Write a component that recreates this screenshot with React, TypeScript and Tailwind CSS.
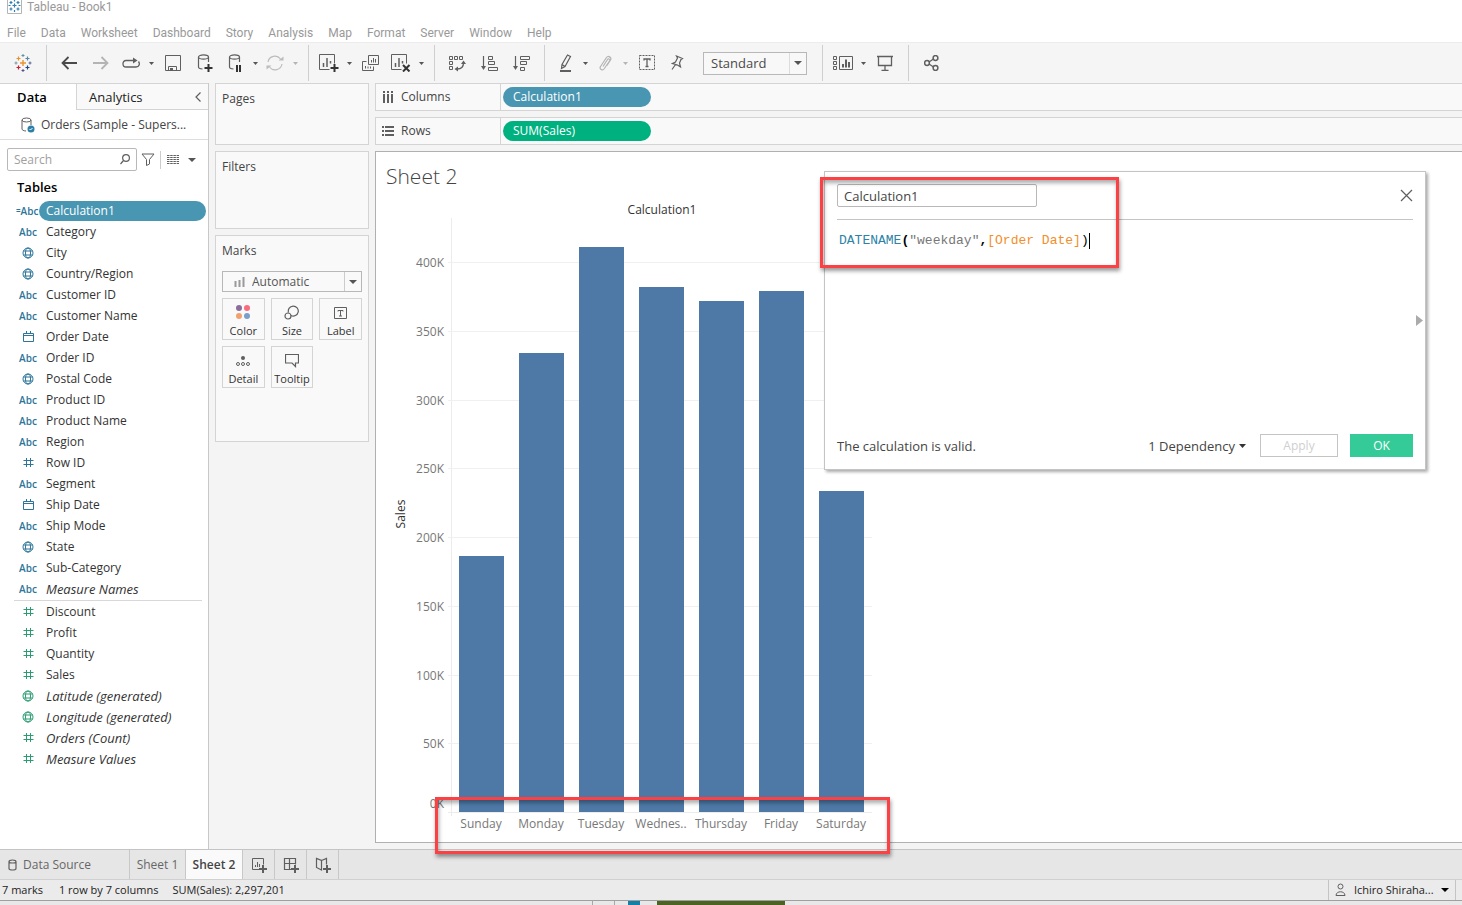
import { ReactNode } from "react";

interface IconProps {
  w?: number;
  h?: number;
  color?: string;
  children: ReactNode;
}

const Icon = ({ w = 20, h = 20, color = "#5f5f5f", children }: IconProps) => (
  <svg width={w} height={h} viewBox={`0 0 ${w} ${h}`} fill="none" stroke={color} className="shrink-0" aria-hidden="true">
    {children}
  </svg>
);

const Arrow = ({ color = "#555555" }: { color?: string }) => (
  <Icon w={8} h={4} color="none">
    <path d="M0 0h8L4 4z" fill={color} />
  </Icon>
);

const SmallCaret = ({ label, color = "#555555" }: { label: string; color?: string }) => (
  <button type="button" aria-label={label} className="flex h-8 w-3 items-center justify-center">
    <Icon w={5} h={3} color="none">
      <path d="M0 0h5L2.5 3z" fill={color} />
    </Icon>
  </button>
);

const ToolButton = ({ label, narrow, children }: { label: string; narrow?: boolean; children: ReactNode }) => (
  <button
    type="button"
    aria-label={label}
    className={`flex h-8 shrink-0 items-center justify-center ${narrow ? "w-7" : "w-8"}`}
  >
    {children}
  </button>
);

const ToolDivider = () => <div className="mr-1.5 ml-[7px] h-9 w-px shrink-0 bg-[#cfcfcf]" />;

const TableauLogo = () => (
  <Icon w={18} h={18} color="none">
    <path d="M9 6v6M6 9h6" stroke="#eb912c" strokeWidth="1.4" />
    <path d="M4.5 2.5v4M2.5 4.5h4" stroke="#eb912c" strokeWidth="1.2" />
    <path d="M13.5 2.5v4M11.5 4.5h4" stroke="#59879b" strokeWidth="1.2" />
    <path d="M4.5 11.5v4M2.5 13.5h4" stroke="#c72035" strokeWidth="1.2" />
    <path d="M13.5 11.5v4M11.5 13.5h4" stroke="#1f447e" strokeWidth="1.2" />
    <path d="M9 0v3M7.5 1.5h3" stroke="#5c8fa8" />
    <path d="M9 15v3M7.5 16.5h3" stroke="#59508a" />
    <path d="M2 7.5v3M.5 9h3" stroke="#7199a6" />
    <path d="M16 7.5v3M14.5 9h3" stroke="#5b6591" />
  </Icon>
);

const WindowLogo = () => (
  <Icon w={15} h={15} color="#2f7fb5">
    <path d="M.5 0v13.5h14V0" stroke="#b5b5b5" />
    <path d="M7.5 3.5v4M5.5 5.5h4M4 1v3M2.5 2.5h3M11 1v3M9.5 2.5h3M4 7.5v3M2.5 9h3M11 7.5v3M9.5 9h3M7.5 0v1.5M7.5 10v2M1.5 5.5h2M11.5 5.5h2" strokeWidth="1.2" />
  </Icon>
);

const DatabaseShape = () => (
  <>
    <ellipse cx="6.5" cy="4" rx="5" ry="2.2" strokeWidth="1.2" />
    <path d="M1.5 4v10c0 1 1.5 1.8 4 2M11.5 4v5" strokeWidth="1.2" />
  </>
);

const Toolbar = () => (
  <div role="toolbar" className="flex h-[41px] shrink-0 items-center border-t border-[#ececec] bg-[#f5f5f5] pl-[7px]">
    <ToolButton label="Start page"><TableauLogo /></ToolButton>
    <ToolDivider />
    <ToolButton label="Undo">
      <Icon w={16} h={14} color="#4a4a4a"><path d="M16 7H1.5M7.5 1l-6 6 6 6" strokeWidth="1.8" /></Icon>
    </ToolButton>
    <ToolButton label="Redo">
      <Icon w={16} h={14} color="#b4b4b4"><path d="M0 7h14.5M8.5 1l6 6-6 6" strokeWidth="1.8" /></Icon>
    </ToolButton>
    <ToolButton label="Replay" narrow>
      <Icon w={18} h={12}>
        <path d="M12 3.5H4C0 3.5 0 10 4 10h10c3.5 0 4-3.5 2.5-5.5" strokeWidth="1.3" />
        <path d="M11 .5l4.5 3-4.5 3z" fill="#5f5f5f" stroke="none" />
      </Icon>
    </ToolButton>
    <SmallCaret label="Replay options" />
    <ToolButton label="Save">
      <Icon w={17} h={17}>
        <path d="M.5 .5h15v15H.5zM3.5 15.5v-4h8v4" />
        <path d="M5 13h3v2.5H5z" fill="#5f5f5f" stroke="none" />
      </Icon>
    </ToolButton>
    <ToolButton label="New data source">
      <Icon w={17} h={20}>
        <DatabaseShape />
        <path d="M11.5 11v8M7.5 15h8" stroke="#333333" strokeWidth="2" />
      </Icon>
    </ToolButton>
    <ToolButton label="Pause auto updates" narrow>
      <Icon w={14} h={20}>
        <DatabaseShape />
        <path d="M9 12v7M12 12v7" stroke="#333333" strokeWidth="2" />
      </Icon>
    </ToolButton>
    <SmallCaret label="Pause options" />
    <ToolButton label="Run update" narrow>
      <Icon w={18} h={16} color="#bcbcbc">
        <path d="M2 7a7 7 0 0 1 12.5-3M16 9a7 7 0 0 1-12.5 3" strokeWidth="1.2" />
        <path d="M12.5 5.5h5v-4zM5.5 10.5h-5v4z" fill="#bcbcbc" stroke="none" />
      </Icon>
    </ToolButton>
    <SmallCaret label="Update options" color="#b5b5b5" />
    <ToolDivider />
    <ToolButton label="New worksheet" narrow>
      <Icon w={20} h={18}>
        <path d="M10.5 15.5H.5V.5h15v9" />
        <path d="M4.5 13V9M8 13V4M11.5 9.5V7" strokeWidth="1.5" />
        <path d="M15.5 10v8M11.5 14h8" stroke="#333333" strokeWidth="2" />
      </Icon>
    </ToolButton>
    <SmallCaret label="New sheet options" />
    <ToolButton label="Duplicate">
      <Icon w={18} h={17}>
        <path d="M6.5 .5h10v9h-10zM4.5 6.5h-4v9h11v-4" />
        <path d="M9.5 7.5V5M11.5 7.5V3M13.5 7.5V4M3.5 13.5V11M6 13.5v-2M8.5 13.5v-2" />
      </Icon>
    </ToolButton>
    <ToolButton label="Clear sheet" narrow>
      <Icon w={20} h={18}>
        <path d="M10.5 15.5H.5V.5h15v9" />
        <path d="M4.5 13V9M8 13V4M11.5 9.5V7" strokeWidth="1.5" />
        <path d="M12 11l6.5 6.5M18.5 11L12 17.5" stroke="#333333" strokeWidth="2" />
      </Icon>
    </ToolButton>
    <SmallCaret label="Clear options" />
    <ToolDivider />
    <ToolButton label="Swap rows and columns">
      <Icon w={17} h={17}>
        <path d="M.5 1.5h3v3h-3zM5.5 1.5h3v3h-3zM10.5 1.5h3v3h-3zM.5 6.5h3v3h-3zM.5 11.5h3v3h-3z" />
        <path d="M8 14c5 0 6.5-2 6.5-6" strokeWidth="1.3" />
        <path d="M9 11.5v5L5.5 14zM12 9h5l-2.5-3.5z" fill="#5f5f5f" stroke="none" />
      </Icon>
    </ToolButton>
    <ToolButton label="Sort ascending">
      <Icon w={17} h={15}>
        <path d="M2.5 0v12" strokeWidth="1.2" />
        <path d="M0 10h5L2.5 14z" fill="#5f5f5f" stroke="none" />
        <path d="M7.5 .5h4v3h-4zM7.5 5.5h6v3h-6zM7.5 11.5h9v3h-9z" />
      </Icon>
    </ToolButton>
    <ToolButton label="Sort descending">
      <Icon w={17} h={15}>
        <path d="M2.5 0v12" strokeWidth="1.2" />
        <path d="M0 10h5L2.5 14z" fill="#5f5f5f" stroke="none" />
        <path d="M7.5 .5h9v3h-9zM7.5 5.5h6v3h-6zM7.5 11.5h4v3h-4z" />
      </Icon>
    </ToolButton>
    <ToolDivider />
    <ToolButton label="Highlight" narrow>
      <Icon w={13} h={18}>
        <path d="M8.5 1l3 1.5-5.5 10-3.5 2 .5-4zM3 10.5l3 2" strokeWidth="1.2" />
        <path d="M1 17h11" strokeWidth="2" />
      </Icon>
    </ToolButton>
    <SmallCaret label="Highlight options" />
    <ToolButton label="Group members" narrow>
      <Icon w={13} h={17} color="#b4b4b4">
        <path d="M4 11.5l4.5-7c1-1.5 3 0 2 1.5L5 14c-1.5 2-5 0-3.5-2.5l6-9C9 0 13 2.500 11.500 5L8 10.500" strokeWidth="1.2" />
      </Icon>
    </ToolButton>
    <SmallCaret label="Group options" color="#b5b5b5" />
    <ToolButton label="Show mark labels">
      <Icon w={17} h={16}>
        <path d="M.5 .5h15v14H.5z" strokeDasharray="2 1" />
        <path d="M5 5.5V4h6v1.5M8 4v7.5M6.5 11.5h3" strokeWidth="1.3" />
      </Icon>
    </ToolButton>
    <ToolButton label="Fix axes" narrow>
      <Icon w={13} h={16}>
        <path d="M5.5 1l6 2.5-1.5 1L8.500 8l1 4L6.500 10 1.500 8.500l3-1.500L6.500 3zM4.500 9.500L1 14.500" strokeWidth="1.2" />
      </Icon>
    </ToolButton>
    <div className="relative ml-3 h-[23px] w-[104px] shrink-0">
      <select aria-label="Fit" className="h-full w-full appearance-none border border-[#b8b8b8] bg-[#f8f8f8] pl-[7px] text-[13px] leading-5 text-[#4a4a4a]">
        <option>Standard</option>
      </select>
      <span className="pointer-events-none absolute inset-y-px right-px flex w-[17px] items-center justify-center border-l border-[#dcdcdc]">
        <Arrow />
      </span>
    </div>
    <div className="w-2 shrink-0" />
    <ToolDivider />
    <ToolButton label="Show cards" narrow>
      <Icon w={20} h={15}>
        <path d="M.5 .5h3v3h-3zM.5 5.5h3v3h-3zM.5 10.5h3v3h-3zM6.5 .5h13v13h-13z" />
        <path d="M10 11.5V8M13 11.5V3.5M16 11.5V6" strokeWidth="2" />
      </Icon>
    </ToolButton>
    <SmallCaret label="Card options" />
    <ToolButton label="Presentation mode">
      <Icon w={16} h={16}>
        <path d="M0 1.5h16M1.5 1.5v9h13v-9M8 10.5v5M4.5 15.5h7" strokeWidth="1.3" />
      </Icon>
    </ToolButton>
    <ToolDivider />
    <ToolButton label="Share">
      <Icon w={15} h={16}>
        <circle cx="3" cy="8" r="2.4" strokeWidth="1.5" />
        <circle cx="11.5" cy="3" r="2.4" strokeWidth="1.5" />
        <circle cx="11.5" cy="13" r="2.4" strokeWidth="1.5" />
        <path d="M5 7l4.5-3M5 9l4.5 3" strokeWidth="1.3" />
      </Icon>
    </ToolButton>
  </div>
);

type FieldKind = "calc" | "abc" | "geo" | "date" | "num";

const dimensions: [FieldKind, string][] = [
  ["calc", "Calculation1"],
  ["abc", "Category"],
  ["geo", "City"],
  ["geo", "Country/Region"],
  ["abc", "Customer ID"],
  ["abc", "Customer Name"],
  ["date", "Order Date"],
  ["abc", "Order ID"],
  ["geo", "Postal Code"],
  ["abc", "Product ID"],
  ["abc", "Product Name"],
  ["abc", "Region"],
  ["num", "Row ID"],
  ["abc", "Segment"],
  ["date", "Ship Date"],
  ["abc", "Ship Mode"],
  ["geo", "State"],
  ["abc", "Sub-Category"],
  ["abc", "Measure Names"],
];

const measures: [FieldKind, string][] = [
  ["num", "Discount"],
  ["num", "Profit"],
  ["num", "Quantity"],
  ["num", "Sales"],
  ["geo", "Latitude (generated)"],
  ["geo", "Longitude (generated)"],
  ["num", "Orders (Count)"],
  ["num", "Measure Values"],
];

const generated = ["Measure Names", "Latitude (generated)", "Longitude (generated)", "Orders (Count)", "Measure Values"];

const FieldIcon = ({ kind, color }: { kind: FieldKind; color: string }) => {
  switch (kind) {
    case "geo":
      return (
        <Icon w={12} h={12} color={color}>
          <circle cx="6" cy="6" r="5" />
          <ellipse cx="6" cy="6" rx="2.5" ry="5" />
          <path d="M1.5 4h9M1.5 8h9" />
        </Icon>
      );
    case "date":
      return (
        <Icon w={11} h={11} color={color}>
          <path d="M.5 2.5h10v8H.5zM.5 4.5h10M3.5 0v2.5M7.5 0v2.5" />
        </Icon>
      );
    case "num":
      return (
        <Icon w={11} h={11} color={color}>
          <path d="M3.5 1v9M7.5 1v9M.5 3.5h10M.5 7.5h10" />
        </Icon>
      );
    case "calc":
      return (
        <span className="flex items-center text-[10px] font-semibold text-[#2d7599]">
          <span className="text-[8px]">=</span>Abc
        </span>
      );
    default:
      return <span className="text-[10px] font-semibold text-[#2d7599]">Abc</span>;
  }
};

const FieldRow = ({ kind, name, color }: { kind: FieldKind; name: string; color: string }) => (
  <li className="flex h-[21px] items-center pl-4">
    <span className={`flex w-6 shrink-0 items-center ${kind === "calc" ? "justify-start" : "justify-center"}`}>
      <FieldIcon kind={kind} color={color} />
    </span>
    <button
      type="button"
      className={`mr-0.5 ml-[-1px] h-5 grow rounded-full pl-[7px] text-left leading-5 ${
        kind === "calc" ? "bg-[#4996b2] text-white" : "text-[#333333]"
      } ${generated.includes(name) ? "text-[13px] italic" : ""}`}
    >
      {name}
    </button>
  </li>
);

const DataPane = () => (
  <aside className="flex w-[209px] shrink-0 flex-col border-r border-[#c8c8c8] bg-white">
    <div className="flex h-[27px] shrink-0 border-t border-[#d4d4d4] text-[13px]">
      <button type="button" className="w-[76px] pr-3 font-semibold text-black">Data</button>
      <button type="button" className="flex grow items-center justify-between border-b border-l border-[#d4d4d4] bg-[#f9f9f9] pr-[7px] pl-3 text-[#222222]">
        Analytics
        <Icon w={6} h={10}><path d="M5.5 .5L1 5l4.5 4.5" strokeWidth="1.2" /></Icon>
      </button>
    </div>
    <div className="flex h-[30px] shrink-0 items-center gap-1.5 border-b border-[#dedede] pl-[21px] text-[#444444]">
      <Icon w={14} h={16}>
        <ellipse cx="5.5" cy="3" rx="4.5" ry="2" />
        <path d="M1 3v9c0 1 1.5 1.8 4 2M10 3v5" />
        <circle cx="10" cy="12" r="3.5" fill="#2d7fa5" stroke="none" />
        <path d="M8.5 12l1 1 2-2" stroke="#ffffff" />
      </Icon>
      Orders (Sample - Supers...
    </div>
    <div className="mt-2 flex h-[23px] shrink-0 items-center pl-[7px]">
      <div className="relative h-full w-[130px]">
        <input aria-label="Search" placeholder="Search" className="h-full w-full rounded-xs border border-[#b8b8b8] pl-1.5 placeholder:text-[#a0a0a0]" />
        <span className="absolute inset-y-0 right-[7px] flex items-center">
          <Icon w={10} h={11}><circle cx="6" cy="4" r="3.4" strokeWidth="1.2" /><path d="M3.5 6.5L.5 10" strokeWidth="1.2" /></Icon>
        </span>
      </div>
      <button type="button" aria-label="Filter fields" className="ml-1">
        <Icon w={14} h={13}><path d="M1 1h12L8.5 6.5V11l-3 1.5v-6z" /></Icon>
      </button>
      <div className="mr-1.5 ml-[5px] h-[18px] w-px bg-[#cccccc]" />
      <button type="button" aria-label="View options" className="flex items-center gap-2">
        <Icon w={13} h={9}><path d="M0 .5h12M0 2.5h12M0 4.5h12M0 6.5h12M0 8.5h12" strokeDasharray="2.5 .7" /></Icon>
        <Arrow />
      </button>
    </div>
    <h2 className="mt-[5px] mb-0.5 pl-[17px] text-[13px] leading-[22px] font-semibold text-black">Tables</h2>
    <ul>
      {dimensions.map(([kind, name]) => (
        <FieldRow key={name} kind={kind} name={name} color="#2d7599" />
      ))}
    </ul>
    <div className="mt-px mr-1.5 ml-3.5 h-px shrink-0 bg-[#d8d8d8]" />
    <ul>
      {measures.map(([kind, name]) => (
        <FieldRow key={name} kind={kind} name={name} color="#2a9d72" />
      ))}
    </ul>
  </aside>
);

const MarkButton = ({ label, children }: { label: string; children: ReactNode }) => (
  <button type="button" className="flex h-[42px] flex-col items-center justify-between border border-[#d4d4d4] pt-1.5 text-[11px] leading-4 text-[#333333]">
    {children}
    {label}
  </button>
);

const Cards = () => (
  <div className="mx-1.5 flex w-[154px] shrink-0 flex-col gap-1.5 text-[#444444]">
    <section className="h-[62px] border border-[#d4d4d4] bg-[#f9f9f9] px-1.5 pt-[7px]">Pages</section>
    <section className="h-[78px] border border-[#d4d4d4] bg-[#f9f9f9] px-1.5 pt-[7px]">Filters</section>
    <section className="h-[207px] border border-[#d4d4d4] bg-[#f9f9f9] px-1.5 pt-[7px]">
      Marks
      <div className="relative mt-3 mb-1.5 h-[21px]">
        <select aria-label="Mark type" className="h-full w-full appearance-none border border-[#b8b8b8] pl-[29px] text-[#555555]">
          <option>Automatic</option>
        </select>
        <span className="pointer-events-none absolute inset-y-0 left-3 flex items-center">
          <Icon w={11} h={10} color="#9a9a9a"><path d="M1.5 10V4M5.5 10V3M9.5 10V0" strokeWidth="2" /></Icon>
        </span>
        <span className="pointer-events-none absolute inset-y-px right-px flex w-[17px] items-center justify-center border-l border-[#cccccc]">
          <Arrow />
        </span>
      </div>
      <div className="grid grid-cols-3 gap-1.5">
        <MarkButton label="Color">
          <Icon w={15} h={15} color="none">
            <circle cx="3" cy="3" r="3" fill="#8a6d9b" />
            <circle cx="11" cy="3" r="3" fill="#fb6a7e" />
            <circle cx="3" cy="11" r="3" fill="#f2a072" />
            <circle cx="11" cy="11" r="3" fill="#7b9fc9" />
          </Icon>
        </MarkButton>
        <MarkButton label="Size">
          <Icon w={15} h={15}>
            <path d="M4.5 7.5a5 5 0 1 1 2.5 3" strokeWidth="1.2" />
            <circle cx="4" cy="11" r="3" strokeWidth="1.2" />
          </Icon>
        </MarkButton>
        <MarkButton label="Label">
          <Icon w={13} h={15}>
            <path d="M.5 2.5h12v11H.5z" />
            <path d="M4 6.5V5.5h5v1M6.5 5.5V11M5 11h3" />
          </Icon>
        </MarkButton>
        <MarkButton label="Detail">
          <Icon w={14} h={15}>
            <circle cx="7" cy="5" r="2" fill="#5f5f5f" stroke="none" />
            <circle cx="2" cy="11" r="1.5" />
            <circle cx="7" cy="11" r="1.5" />
            <circle cx="12" cy="11" r="1.5" />
          </Icon>
        </MarkButton>
        <MarkButton label="Tooltip">
          <Icon w={14} h={15}><path d="M.5 1.5h13V10h-3v3.5L7 10H.5z" strokeWidth="1.2" /></Icon>
        </MarkButton>
      </div>
    </section>
  </div>
);

const Shelf = ({ name, pill, pillClass, icon }: { name: string; pill: string; pillClass: string; icon: ReactNode }) => (
  <div className="flex h-7 shrink-0 items-center border border-r-0 border-[#d4d4d4] bg-[#f9f9f9]">
    <div className="flex h-full w-[125px] items-center gap-[7px] border-r border-[#d4d4d4] pl-1.5 text-[#444444]">
      {icon}
      {name}
    </div>
    <button type="button" className={`ml-0.5 h-5 w-[148px] rounded-full pl-[10px] text-left leading-5 font-medium text-white ${pillClass}`}>
      {pill}
    </button>
  </div>
);

const days: [string, number][] = [
  ["Sunday", 256],
  ["Monday", 459],
  ["Tuesday", 565],
  ["Wednes..", 525],
  ["Thursday", 511],
  ["Friday", 521],
  ["Saturday", 321],
];

const ticks: [string, number][] = [
  ["400K", 110],
  ["350K", 179],
  ["300K", 248],
  ["250K", 316],
  ["200K", 385],
  ["150K", 454],
  ["100K", 523],
  ["50K", 591],
];

const BASELINE = 660;

const Chart = () => (
  <svg width="500" height="690" viewBox="0 0 500 690" role="img" aria-label="Sales by weekday" fontSize="12" className="block">
    <text x="10" y="32" fontSize="21" fill="#444444" fontWeight="300">Sheet 2</text>
    <text x="286" y="62" fill="#333333" textAnchor="middle">Calculation1</text>
    <text transform="rotate(-90 29 362)" x="29" y="362" fill="#333333" textAnchor="middle">Sales</text>
    <path d="M75.5 66v598M72 660.5h424" stroke="#ececec" />
    {ticks.map(([label, y]) => (
      <g key={label}>
        <path d={`M72 ${y}.5h424`} stroke="#f0f0f0" />
        <text x="68" y={y + 5} fill="#777777" textAnchor="end">{label}</text>
      </g>
    ))}
    <text x="68" y="656" fill="#777777" textAnchor="end">0K</text>
    {days.map(([day, height], i) => (
      <g key={day}>
        <rect x={83 + i * 60} y={BASELINE - height} width="45" height={height} fill="#4e79a7" />
        <text x={105 + i * 60} y="676" fill="#777777" textAnchor="middle">{day}</text>
      </g>
    ))}
  </svg>
);

const CalculationDialog = () => (
  <div role="dialog" aria-label="Calculation editor" className="absolute top-[171px] left-[824px] flex h-[299px] w-[602px] flex-col border border-[#c4c4c4] bg-white p-3 text-[13px] text-[#444444] shadow-[2px_2px_3px_#00000055]">
    <div className="flex items-center justify-between border-b border-[#c4c4c4] pb-3">
      <input aria-label="Calculation name" defaultValue="Calculation1" className="h-[23px] w-[200px] rounded-xs border border-[#b8b8b8] pl-1.5" />
      <button type="button" aria-label="Close">
        <Icon w={13} h={13}><path d="M1 1l11 11M12 1L1 12" strokeWidth="1.2" /></Icon>
      </button>
    </div>
    <div className="mt-3 flex items-center pl-0.5 font-['Liberation_Mono',monospace] leading-[18px] whitespace-pre text-black">
      <span className="text-[#2d82a5]">DATENAME</span>
      <span className="font-bold">(</span>
      <span className="text-[#777777]">"weekday"</span>
      <span className="font-bold">,</span>
      <span className="text-[#f28e2b]">[Order Date]</span>
      <span>)</span>
      <span className="h-4 w-px bg-black" />
    </div>
    <button type="button" aria-label="Show functions" className="absolute top-[143px] right-0.5">
      <Icon w={7} h={11} color="none"><path d="M0 0l7 5.5L0 11z" fill="#ababab" /></Icon>
    </button>
    <div className="mt-auto flex items-center">
      <p className="grow">The calculation is valid.</p>
      <button type="button" className="mr-3.5 flex items-center gap-1">
        1 Dependency
        <Icon w={7} h={4} color="none"><path d="M0 0h7L3.5 4z" fill="#333333" /></Icon>
      </button>
      <button type="button" disabled className="mr-3 h-[23px] w-[78px] border border-[#c4c4c4] text-[12px] text-[#cfcfcf]">Apply</button>
      <button type="button" className="h-[23px] w-[63px] bg-[#35cb98] text-[12px] text-white">OK</button>
    </div>
  </div>
);

const SheetTabs = () => (
  <div className="flex h-[30px] shrink-0 border-t border-[#c4c4c4] bg-[#e6e6e6] text-[#666666]">
    <button type="button" className="flex w-[130px] items-center gap-[5px] border-r border-[#c8c8c8] pl-2">
      <Icon w={10} h={12}><path d="M1 2.5v7c0 2 7 2 7 0v-7c0-2-7-2-7 0s7 2 7 0" strokeWidth="1.2" /></Icon>
      Data Source
    </button>
    <button type="button" className="w-14 border-r border-[#c8c8c8]">Sheet 1</button>
    <button type="button" className="w-[57px] border-r border-[#c8c8c8] bg-[#fafafa] font-semibold text-[#444444]">Sheet 2</button>
    <button type="button" aria-label="New worksheet" className="flex w-8 items-center justify-center border-r border-[#c8c8c8]">
      <Icon w={16} h={16}>
        <path d="M8.5 12.5h-7V1.5h11v6M4.5 10V8M6.5 10V5M8.5 10V7" />
        <path d="M12 8v8M8 12h8" strokeWidth="2" />
      </Icon>
    </button>
    <button type="button" aria-label="New dashboard" className="flex w-8 items-center justify-center border-r border-[#c8c8c8]">
      <Icon w={16} h={16}>
        <path d="M8.5 12.5h-7V1.5h11v6M1.5 6.5h11M6.5 1.5v11" strokeWidth="1.2" />
        <path d="M12 8v8M8 12h8" strokeWidth="2" />
      </Icon>
    </button>
    <button type="button" aria-label="New story" className="flex w-8 items-center justify-center border-r border-[#c8c8c8]">
      <Icon w={16} h={16}>
        <path d="M6.5 13l-5-2.5v-9l5 2zM6.5 3.5l5-2v6" strokeWidth="1.2" />
        <path d="M12 8v8M8 12h8" strokeWidth="2" />
      </Icon>
    </button>
  </div>
);

const StatusBar = () => (
  <footer className="flex h-[22px] shrink-0 items-center border-y border-t-[#d0d0d0] border-b-[#a0a0a0] bg-[#ebebeb] text-[11px] text-[#222222]">
    <span className="ml-0.5">7 marks</span>
    <span className="ml-4">1 row by 7 columns</span>
    <span className="ml-3.5 grow">SUM(Sales): 2,297,201</span>
    <button type="button" className="mr-1.5 flex h-full w-[128px] items-center border-x border-[#c4c4c4] px-1.5">
      <Icon w={11} h={14}>
        <circle cx="5.5" cy="3.5" r="2.5" />
        <path d="M1 12.5c0-5 9-5 9 0z" />
      </Icon>
      <span className="grow pl-2 text-left">Ichiro Shiraha...</span>
      <Arrow color="#000000" />
    </button>
  </footer>
);

const menus = ["File", "Data", "Worksheet", "Dashboard", "Story", "Analysis", "Map", "Format", "Server", "Window", "Help"];

const App = () => (
  <div className="relative flex h-screen flex-col overflow-hidden bg-[#f4f4f4] font-['Open_Sans',sans-serif] text-[12px] leading-4">
    <header className="shrink-0 bg-white font-['Roboto',sans-serif] text-[#999999]">
      <div className="flex h-6 items-start gap-[5px] pl-[7px]">
        <WindowLogo />
        <span className="leading-[14px]">Tableau - Book1</span>
      </div>
      <nav className="flex h-[18px] items-center gap-[15px] pl-[7px]">
        {menus.map((menu) => (
          <button key={menu} type="button">{menu}</button>
        ))}
      </nav>
    </header>
    <Toolbar />
    <main className="flex min-h-0 grow">
      <DataPane />
      <Cards />
      <div className="flex min-w-0 grow flex-col gap-1.5 pb-1.5">
        <Shelf
          name="Columns"
          pill="Calculation1"
          pillClass="bg-[#4996b2]"
          icon={<Icon w={12} h={12}><path d="M2 0v12M6 0v12M10 0v12" strokeWidth="2" strokeDasharray="2 1 9" /></Icon>}
        />
        <Shelf
          name="Rows"
          pill="SUM(Sales)"
          pillClass="bg-[#00b180]"
          icon={<Icon w={12} h={12}><path d="M0 2h12M0 6h12M0 10h12" strokeWidth="2" strokeDasharray="2 1 9" /></Icon>}
        />
        <section className="min-h-0 grow overflow-hidden border border-r-0 border-[#b0b0b0] bg-white">
          <Chart />
        </section>
      </div>
    </main>
    <SheetTabs />
    <StatusBar />
    <div className="flex h-1 shrink-0 bg-[#e8e8e8]">
      <div className="ml-[592px] w-[23px] border-x border-[#a8a8a8]" />
      <div className="ml-[13px] w-3 bg-[#1480a8]" />
      <div className="ml-[17px] w-32 bg-[#4b6422]" />
    </div>
    <CalculationDialog />
    <div className="pointer-events-none absolute top-[177px] left-[820px] h-[91px] w-[299px] border-3 border-[#fb4144] shadow-[1px_3px_4px_#00000066,inset_1px_3px_4px_#00000055]" />
    <div className="pointer-events-none absolute top-[797px] left-[435px] h-[57px] w-[455px] border-3 border-[#fb4144] shadow-[1px_3px_4px_#00000066,inset_1px_3px_4px_#00000055]" />
  </div>
);

export default App;
